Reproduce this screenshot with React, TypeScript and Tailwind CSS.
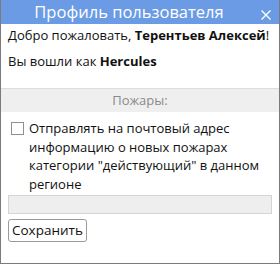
export default function App() {
  return (
    <div className="w-[280px] h-[264px] bg-white border-x border-b border-[#7b7b7b] flex flex-col font-['Open_Sans',sans-serif] text-[13px] text-[#111]">
      <div className="relative h-[24px] shrink-0 bg-[#6a9be4] flex items-center justify-center pr-[22px] text-white text-[16.5px] leading-none">
        <span>Профиль пользователя</span>
        <svg className="absolute right-[8px] top-[10px]" width="10" height="10" viewBox="0 0 10 10">
          <path d="M0.5 0.5L9.5 9.5M9.5 0.5L0.5 9.5" stroke="white" strokeWidth="1.4" />
        </svg>
      </div>

      <div className="px-[7px] pt-[2px] flex flex-col gap-[8px] leading-[18px]">
        <p>
          Добро пожаловать, <b className="font-bold">Терентьев Алексей</b>!
        </p>
        <p>
          Вы вошли как <b className="font-bold">Hercules</b>
        </p>
      </div>

      <div className="mt-[18px] h-[24px] bg-[#efefef] border-t border-[#dcdcdc] flex items-center justify-center text-[#8a8a8a]">
        Пожары:
      </div>

      <div className="px-[7px] pt-[7px] flex flex-col">
        <label className="flex items-start gap-[5px] leading-[18.5px]">
          <span className="mt-[3px] ml-[3px] w-[13px] h-[13px] shrink-0 border border-[#8f8f8f] bg-white" />
          <span>
            Отправлять на почтовый адрес информацию о новых пожарах категории "действующий" в данном регионе
          </span>
        </label>
        <div className="mt-[2px] h-[19px] bg-[#eeeeee] border border-[#d4d4d4]" />
        <div className="mt-[5px]">
          <button className="h-[23px] px-[3px] border border-[#9a9a9a] rounded-[3px] bg-white text-[13.5px] leading-none text-[#111]">
            Сохранить
          </button>
        </div>
      </div>
    </div>
  )
}
